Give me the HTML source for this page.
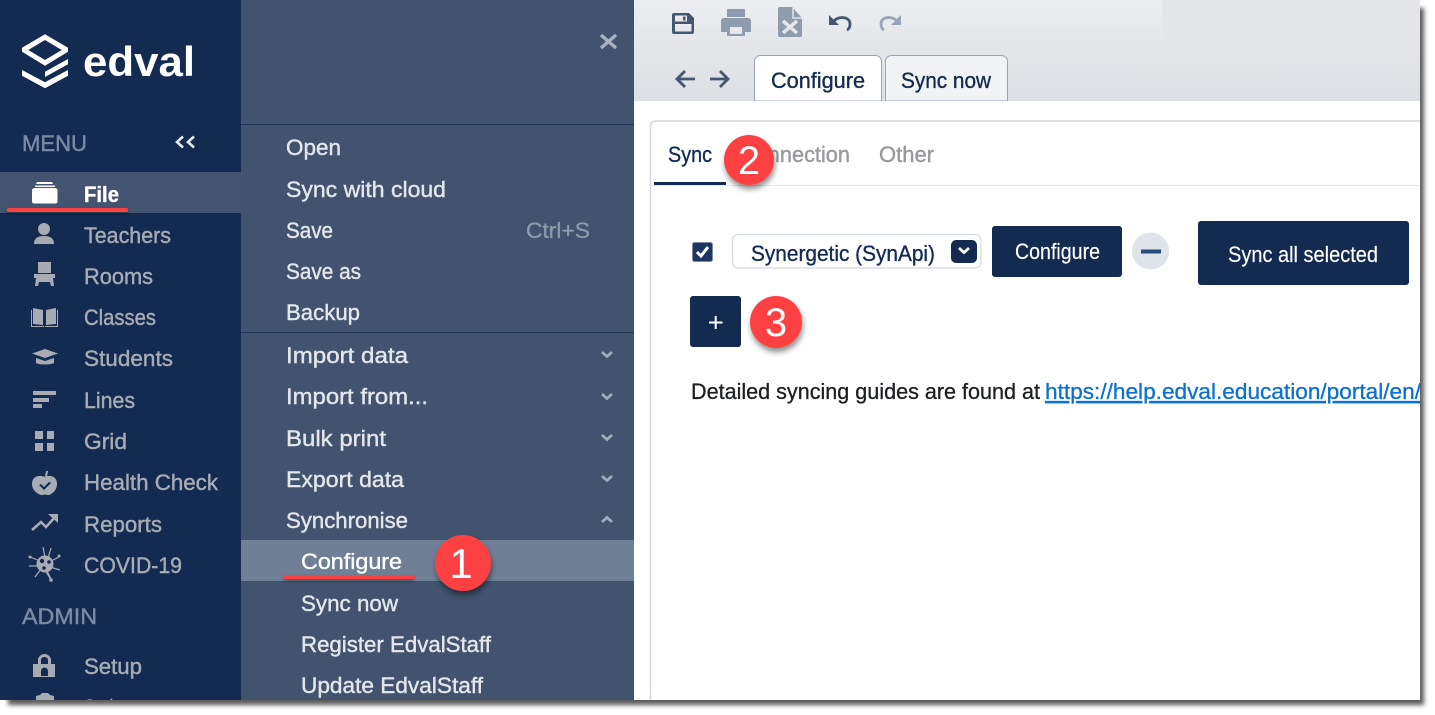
<!DOCTYPE html>
<html><head><meta charset="utf-8"><style>
html,body{margin:0;padding:0;background:#fff;width:1435px;height:715px;overflow:hidden}
svg{display:block}
text{font-family:"Liberation Sans",sans-serif;font-size:22px}
.s{fill:#a7acb4;stroke:#a7acb4;stroke-width:.4}
.p{fill:#e3e6eb;stroke:#e3e6eb;stroke-width:.4}
.d{fill:#132b50;stroke:#132b50;stroke-width:.35}
.w{fill:#fff;stroke:#fff;stroke-width:.35}
.h{fill:#7c8aa1;stroke:#7c8aa1;stroke-width:.4}
.g{fill:#97999f;stroke:#97999f;stroke-width:.4}
.n{font-size:44px;fill:#fff}
</style></head><body>
<svg width="1435" height="715" viewBox="0 0 1435 715" xmlns="http://www.w3.org/2000/svg">
<defs>
<filter id="b" x="-5%" y="-5%" width="110%" height="110%"><feGaussianBlur stdDeviation="2.300"/></filter>
<filter id="ds" x="-40%" y="-40%" width="180%" height="180%"><feDropShadow dx="1" dy="4" stdDeviation="3" flood-color="#000" flood-opacity=".45"/></filter>
<filter id="ls" x="-10%" y="-300%" width="120%" height="700%"><feDropShadow dx="0" dy="2" stdDeviation="1.500" flood-color="#000" flood-opacity=".35"/></filter>
<linearGradient id="tb" x1="0" y1="0" x2="0" y2="1"><stop offset="0" stop-color="#e4e6ea"/><stop offset=".55" stop-color="#e3e5e9"/><stop offset="1" stop-color="#dcdfe3"/></linearGradient>
<linearGradient id="tb2" x1="0" y1="0" x2="0" y2="1"><stop offset="0" stop-color="#eceef1"/><stop offset="1" stop-color="#eceef1" stop-opacity="0"/></linearGradient>
<clipPath id="page"><rect x="0" y="0" width="1420" height="700"/></clipPath>
</defs>

<rect x="8" y="8" width="1416" height="697" fill="#5a5a5a" filter="url(#b)"/>

<g clip-path="url(#page)">
<rect width="1420" height="700" fill="#fff"/>
<!-- sidebar -->
<rect x="0" y="0" width="241" height="700" fill="#132b50"/>
<rect x="0" y="172" width="241" height="41" fill="#42546f"/>
<path fill="#fff" fill-rule="evenodd" d="M45 34.300L68 47.700V51.700L45 65.700L22 51.700V47.700ZM45 40L28.300 50L45 60L61.700 50Z"/>
<path fill="#fff" d="M45 71.700L68 59V64.300L45 77ZM22 70L45 82.300L68 70V75.700L45 88.300L22 75.700Z"/>
<text x="83" y="76" font-weight="bold" textLength="112" lengthAdjust="spacingAndGlyphs" fill="#fff" style="font-size:42px">edval</text>
<text x="22" y="151" class="h" textLength="65" lengthAdjust="spacingAndGlyphs">MENU</text>
<path d="M183 136.500L177 142L183 147.500M194 136.500L188 142L194 147.500" fill="none" stroke="#e8eaee" stroke-width="2.600"/>

<!-- sidebar icons -->
<path fill="#fff" d="M37 182h15l1 2H36zM35 185.500h20v1.500H35zM34 188h22l1.500 1.500v12a2 2 0 0 1-2 2H34a2 2 0 0 1-2-2V189.500z"/>
<g fill="#a7acb4">
<circle cx="44" cy="229" r="6"/><path d="M34 244c0-6 4-8 10-8s10 2 10 8z"/>
<path d="M38 262h13v11H38zM34 274h21v4h-2l1 8h-3l-1-4H39l-1 4h-3l1-8h-2z"/>
<path d="M33 308l10 2v15l-10-1zM56 308l-10 2v15l10-1z"/><path d="M31 310h1v16h12v1H31zM57 310h1v17H45v-1h12z"/>
<path d="M45 349l13 4.500-13 4.500-13-4.500zM36 358l9 3 9-3v5c-3 2-15 2-18 0z"/>
<path d="M33 391h23v4H33zM33 398h16v4H33zM33 404h9v4H33z"/>
<path d="M35 431h8v8h-8zM47 431h7v8h-7zM35 443h8v8h-8zM47 443h7v8h-7z"/>
<path fill-rule="evenodd" d="M45 477c3-2 12-2 12 7 0 7-6 11-9 11-2 0-2-.5-3-.5s-1 .5-3 .5c-3 0-10-4-10-11 0-9 9-9 13-7zM39 485l2 2 3 3 7-7-2-1-5 5-3-3z"/>
<path d="M45 477l1-6 2 0-1 6z"/>
</g>
<path d="M32 530l9-8 5 5 10-11" fill="none" stroke="#a7acb4" stroke-width="2.600"/><path d="M48 514h10v9z" fill="#a7acb4"/>
<g stroke="#a7acb4" stroke-width="1.200" fill="none"><path d="M43 547l2 11M51 548l-3 10M30 557l10 4M59 557l-10 5M29 566h10M60 570l-10-3M35 577l6-8M51 579l-5-10M45 570l6 10"/></g>
<circle cx="51" cy="580" r="1.800" fill="#a7acb4"/><circle cx="30" cy="557" r="1.500" fill="#a7acb4"/><circle cx="59" cy="556" r="1.500" fill="#a7acb4"/>
<circle cx="45" cy="564" r="8.500" fill="#a7acb4"/><circle cx="42" cy="561" r="2.200" fill="#132b50"/><circle cx="49" cy="562" r="1.800" fill="#132b50"/><circle cx="44" cy="568" r="1.800" fill="#132b50"/>
<path fill="#a7acb4" fill-rule="evenodd" d="M38 664v-4c0-3 3-6 6.500-6s6.500 3 6.500 6v4h4v13H33v-13zM41 664h7v-4c0-2-1.500-3-3.500-3s-3.500 1-3.500 3zM41 676h7v-5a3.500 3.500 0 0 0-7 0z"/>
<path fill="#a7acb4" d="M36 700v-4l4-1 2-2h6l2 2 4 1v4z"/>

<text x="84" y="202" class="w" textLength="35" lengthAdjust="spacingAndGlyphs" font-weight="bold">File</text>
<text x="84" y="243" class="s" textLength="87" lengthAdjust="spacingAndGlyphs">Teachers</text>
<text x="84" y="284" class="s" textLength="69" lengthAdjust="spacingAndGlyphs">Rooms</text>
<text x="84" y="325" class="s" textLength="72" lengthAdjust="spacingAndGlyphs">Classes</text>
<text x="84" y="366" class="s" textLength="89" lengthAdjust="spacingAndGlyphs">Students</text>
<text x="84" y="408" class="s" textLength="51" lengthAdjust="spacingAndGlyphs">Lines</text>
<text x="84" y="449" class="s" textLength="43" lengthAdjust="spacingAndGlyphs">Grid</text>
<text x="84" y="490" class="s" textLength="134" lengthAdjust="spacingAndGlyphs">Health Check</text>
<text x="84" y="532" class="s" textLength="78" lengthAdjust="spacingAndGlyphs">Reports</text>
<text x="84" y="573" class="s" textLength="98" lengthAdjust="spacingAndGlyphs">COVID-19</text>
<text x="22" y="624" class="h" textLength="75" lengthAdjust="spacingAndGlyphs">ADMIN</text>
<text x="84" y="674" class="s" textLength="58" lengthAdjust="spacingAndGlyphs">Setup</text>
<text x="84" y="715" class="s" textLength="52" lengthAdjust="spacingAndGlyphs">Scripts</text>
<rect x="7" y="208" width="121" height="4" rx="2" fill="#fd4043" filter="url(#ls)"/>

<!-- menu panel -->
<rect x="241" y="0" width="393" height="700" fill="#41536f"/>
<rect x="241" y="124" width="393" height="1" fill="#1f3557"/>
<rect x="241" y="332" width="393" height="1" fill="#24395a"/>
<rect x="241" y="540" width="393" height="41" fill="#6f7f96"/>
<path d="M601 35L616 48M616 35L601 48" stroke="#a9b2c0" stroke-width="3.400" fill="none"/>

<text x="286" y="155" class="p" textLength="55" lengthAdjust="spacingAndGlyphs">Open</text>
<text x="286" y="197" class="p" textLength="160" lengthAdjust="spacingAndGlyphs">Sync with cloud</text>
<text x="286" y="238" class="p" textLength="47" lengthAdjust="spacingAndGlyphs">Save</text>
<text x="526" y="238" fill="#8f9aab" stroke="#8f9aab" stroke-width=".3" textLength="64" lengthAdjust="spacingAndGlyphs">Ctrl+S</text>
<text x="286" y="279" class="p" textLength="75" lengthAdjust="spacingAndGlyphs">Save as</text>
<text x="286" y="320" class="p" textLength="74" lengthAdjust="spacingAndGlyphs">Backup</text>
<text x="286" y="363" class="p" textLength="122" lengthAdjust="spacingAndGlyphs">Import data</text>
<text x="286" y="404" class="p" textLength="142" lengthAdjust="spacingAndGlyphs">Import from...</text>
<text x="286" y="446" class="p" textLength="100" lengthAdjust="spacingAndGlyphs">Bulk print</text>
<text x="286" y="487" class="p" textLength="118" lengthAdjust="spacingAndGlyphs">Export data</text>
<text x="286" y="528" class="p" textLength="122" lengthAdjust="spacingAndGlyphs">Synchronise</text>
<text x="301" y="569" class="w" textLength="101" lengthAdjust="spacingAndGlyphs">Configure</text>
<text x="301" y="611" class="p" textLength="97" lengthAdjust="spacingAndGlyphs">Sync now</text>
<text x="301" y="652" class="p" textLength="190" lengthAdjust="spacingAndGlyphs">Register EdvalStaff</text>
<text x="301" y="693" class="p" textLength="182" lengthAdjust="spacingAndGlyphs">Update EdvalStaff</text>
<g fill="none" stroke="#a3acba" stroke-width="2.800">
<path d="M602 352l5 4.500 5-4.500M602 394l5 4.500 5-4.500M602 435l5 4.500 5-4.500M602 476l5 4.500 5-4.500M602 522l5-4.500 5 4.500"/>
</g>
<rect x="283" y="575" width="132" height="4" rx="2" fill="#fd4043" filter="url(#ls)"/>

<!-- toolbar -->
<rect x="634" y="0" width="786" height="101" fill="url(#tb)"/>
<rect x="634" y="0" width="528" height="45" fill="url(#tb2)"/>
<path fill="#45566f" fill-rule="evenodd" d="M674 13h15l5 5v14a2 2 0 0 1-2 2h-18a2 2 0 0 1-2-2V15a2 2 0 0 1 2-2zM675 15.500v6h12v-6zM675 24v7.500h16.500V24zM683 16.500h2.500v4H683z"/>
<path fill="#8f9bae" fill-rule="evenodd" d="M727 9h18v8h-18zM724 18h24a3 3 0 0 1 3 3v11h-6v4h-18v-4h-6V21a3 3 0 0 1 3-3zM730 27v7h12v-7z"/>
<path fill="#8f9bae" d="M780 7h12l10 11v17a2 2 0 0 1-2 2h-20a2 2 0 0 1-2-2V9a2 2 0 0 1 2-2z"/>
<path d="M793 8v10h9" fill="none" stroke="#e4e6ea" stroke-width="1.500"/>
<path d="M783 21l14 12M797 21L783 33" stroke="#e4e6ea" stroke-width="3.500"/>
<path d="M834 21c4-5 16-5 16 3 0 3-1 5-3 6" fill="none" stroke="#45566f" stroke-width="2.800"/>
<path d="M829 15v10h10z" fill="#45566f"/>
<path d="M897 21c-4-5-16-5-16 3 0 3 1 5 3 6" fill="none" stroke="#98a4b5" stroke-width="2.800"/>
<path d="M901 15v10h-10z" fill="#98a4b5"/>
<path d="M695 79H678M685 71l-8 8 8 8" fill="none" stroke="#45566f" stroke-width="2.800"/>
<path d="M710 79h17M720 71l8 8-8 8" fill="none" stroke="#45566f" stroke-width="2.800"/>

<path d="M754.500 101V61.500a6 6 0 0 1 6-6h115a6 6 0 0 1 6 6V101z" fill="#fff" stroke="#98a3b7"/>
<path d="M885.500 101V61.500a6 6 0 0 1 6-6h110a6 6 0 0 1 6 6V101z" fill="#f1f2f4" stroke="#98a3b7"/>
<rect x="634" y="101" width="786" height="599" fill="#fff"/>
<text x="771" y="88" class="d" textLength="94" lengthAdjust="spacingAndGlyphs">Configure</text>
<text x="901" y="88" class="d" textLength="90" lengthAdjust="spacingAndGlyphs">Sync now</text>

<!-- card -->
<path d="M650.500 705V126a5 5 0 0 1 5-5H1425" fill="none" stroke="#d3d7de" stroke-width="1.500"/>
<rect x="651" y="185" width="769" height="1" fill="#e6e8eb"/>
<text x="668" y="162" class="d" textLength="44" lengthAdjust="spacingAndGlyphs">Sync</text>
<rect x="654" y="182" width="72" height="3" fill="#132b50"/>
<text x="740" y="162" class="g" textLength="110" lengthAdjust="spacingAndGlyphs">Connection</text>
<text x="879" y="162" class="g" textLength="55" lengthAdjust="spacingAndGlyphs">Other</text>

<rect x="692.500" y="242.500" width="20" height="19" rx="2" fill="#1d3560" stroke="#7d8aa0"/>
<path d="M697 252l4 4 7-9" fill="none" stroke="#fff" stroke-width="3"/>
<rect x="732.500" y="234.500" width="248.500" height="33.500" rx="6" fill="#fff" stroke="#d3d8e1" stroke-width="1.200"/>
<text x="751" y="261" class="d" textLength="184" lengthAdjust="spacingAndGlyphs">Synergetic (SynApi)</text>
<rect x="951" y="240" width="26" height="23" rx="5" fill="#132b50"/>
<path d="M959 248l5 4.500 5-4.500" fill="none" stroke="#fff" stroke-width="2.800"/>
<rect x="992" y="226" width="130" height="51" rx="3" fill="#132b50"/>
<text x="1015" y="259" class="w" style="stroke-width:.15" textLength="85" lengthAdjust="spacingAndGlyphs">Configure</text>
<circle cx="1150.500" cy="251" r="18.500" fill="#dfe3ea"/>
<rect x="1141" y="249.500" width="20" height="4" fill="#2b4a7c"/>
<rect x="1198" y="221" width="211" height="64" rx="3" fill="#132b50"/>
<text x="1228" y="262" class="w" style="stroke-width:.15" textLength="150" lengthAdjust="spacingAndGlyphs">Sync all selected</text>
<rect x="690" y="296" width="51" height="51" rx="3" fill="#132b50"/>
<path d="M709 322.500h13.500M715.700 316v13" stroke="#fff" stroke-width="2"/>

<text x="691" y="399" fill="#1d1f22" stroke="#1d1f22" stroke-width=".3" textLength="349" lengthAdjust="spacingAndGlyphs">Detailed syncing guides are found at</text>
<text x="1045" y="399" fill="#0a6fd6" stroke="#0a6fd6" stroke-width=".3" text-decoration="underline" textLength="376" lengthAdjust="spacingAndGlyphs">https://help.edval.education/portal/en/</text>

<!-- badges -->
<circle cx="463" cy="563" r="28" fill="#fd4043" filter="url(#ds)"/>
<text x="461" y="578" class="n" text-anchor="middle" style="font-size:42px">1</text>
<circle cx="749" cy="160" r="25" fill="#fd4043" filter="url(#ds)"/>
<text x="749" y="174" class="n" text-anchor="middle" style="font-size:40px">2</text>
<circle cx="776" cy="322" r="26" fill="#fd4043" filter="url(#ds)"/>
<text x="776" y="336" class="n" text-anchor="middle" style="font-size:40px">3</text>
</g>
</svg>
</body></html>
